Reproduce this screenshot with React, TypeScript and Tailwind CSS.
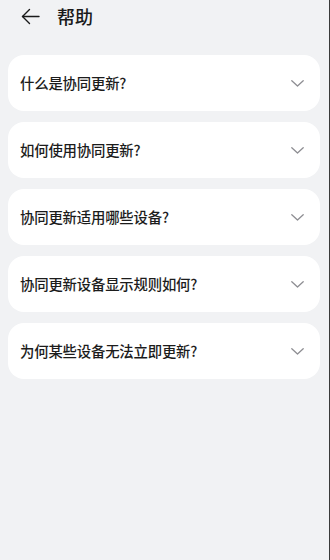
const questions = [
  '什么是协同更新?',
  '如何使用协同更新?',
  '协同更新适用哪些设备?',
  '协同更新设备显示规则如何?',
  '为何某些设备无法立即更新?',
];

function BackArrow() {
  return (
    <svg width="19" height="17" viewBox="0 0 19 17" fill="none">
      <path d="M1.5 8.5 H18" stroke="#1a1a1a" strokeWidth="1.4" strokeLinecap="round" />
      <path d="M8.5 1.5 L1.5 8.5 L8.5 15.5" stroke="#1a1a1a" strokeWidth="1.4" strokeLinecap="round" strokeLinejoin="round" />
    </svg>
  );
}

function Chevron() {
  return (
    <svg width="13" height="7" viewBox="0 0 13 7" fill="none">
      <path d="M0.8 0.8 L6.5 6 L12.2 0.8" stroke="#8e8e93" strokeWidth="1.3" strokeLinecap="round" strokeLinejoin="round" />
    </svg>
  );
}

export default function App() {
  return (
    <div
      className="h-[560px] w-[330px] bg-[#f1f2f4] border-r border-[#3a3a3a] overflow-hidden"
      style={{ fontFamily: '"Noto Sans CJK SC", "Noto Sans", sans-serif' }}
    >
      <div className="h-8 flex items-center pl-[21px]">
        <BackArrow />
        <span className="ml-[17px] text-[18px] font-medium text-[#1a1a1a] leading-none">帮助</span>
      </div>

      <div className="pt-[23px] pl-2 pr-[9px] flex flex-col gap-[11px]">
        {questions.map((q) => (
          <div
            key={q}
            className="h-[56px] bg-white rounded-[16px] flex items-center justify-between pl-3 pr-[16px]"
          >
            <span className="text-[14.4px] font-medium text-[#1c1c1c] tracking-[-0.2px]">{q}</span>
            <Chevron />
          </div>
        ))}
      </div>
    </div>
  );
}
